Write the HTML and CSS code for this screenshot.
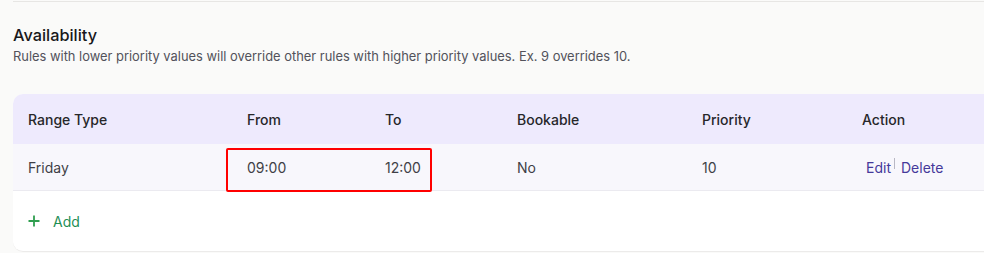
FILE: index.html
```html
<!DOCTYPE html>
<html lang="en">
<head>
<meta charset="utf-8">
<title>Availability</title>
<link rel="stylesheet" href="styles.css">
</head>
<body>
<div class="page">
  <div class="divider"></div>
  <section class="section">
    <h2 class="title">Availability</h2>
    <p class="subtitle">Rules with lower priority values will override other rules with higher priority values. Ex. 9 overrides 10.</p>
    <div class="card">
      <table class="table">
        <colgroup>
          <col class="c1"><col class="c2"><col class="c3"><col class="c4"><col class="c5"><col class="c6">
        </colgroup>
        <thead>
          <tr class="head-row">
            <th>Range Type</th>
            <th>From</th>
            <th>To</th>
            <th>Bookable</th>
            <th>Priority</th>
            <th>Action</th>
          </tr>
        </thead>
        <tbody>
          <tr class="body-row">
            <td>Friday</td>
            <td>09:00</td>
            <td>12:00</td>
            <td>No</td>
            <td>10</td>
            <td class="actions"><a class="link">Edit</a><span class="sep"></span><a class="link">Delete</a></td>
          </tr>
        </tbody>
      </table>
      <div class="add-row">
        <svg class="plus" width="12" height="12" viewBox="0 0 12 12"><path d="M6 0.5V11.5M0.5 6H11.5" stroke="#2f9e4f" stroke-width="1.8" fill="none"/></svg>
        <span class="add-text">Add</span>
      </div>
    </div>
  </section>
  <div class="highlight"></div>
</div>
</body>
</html>
```

FILE: styles.css
```css
html, body {
  margin: 0;
  padding: 0;
  background: #fafaf9;
  overflow: hidden;
}
body {
  font-family: Inter, "Noto Sans", sans-serif;
  color: #3f3f46;
  width: 984px;
  height: 253px;
}
.page {
  position: relative;
  padding-left: 13px;
}
.divider {
  height: 1px;
  margin-top: 1px;
  background: #e7e6e4;
}
.section {
  padding-top: 22px;
}
.title {
  margin: 0;
  font-size: 16.3px;
  line-height: 22px;
  font-weight: 500;
  color: #18181b;
}
.subtitle {
  margin: 2px 0 0;
  font-size: 12.9px;
  line-height: 18px;
  color: #52525b;
}
.card {
  margin-top: 28px;
  background: #ffffff;
  border-radius: 10px 0 0 10px;
  overflow: hidden;
  border-bottom: 1px solid #ecebea;
}
.table {
  width: 100%;
  border-collapse: collapse;
  table-layout: fixed;
  font-size: 14px;
}
.c1 { width: 219px; }
.c2 { width: 138px; }
.c3 { width: 132px; }
.c4 { width: 185px; }
.c5 { width: 160px; }
.c6 { width: auto; }
.head-row {
  background: #eeeafd;
}
.head-row th {
  height: 50px;
  padding: 0 0 0 15px;
  text-align: left;
  font-weight: 500;
  color: #27272a;
}
.body-row {
  background: #f8f7fc;
  border-bottom: 1px solid #ebeaf0;
}
.body-row td {
  height: 46px;
  padding: 0 0 0 15px;
  color: #3f3f46;
}
.actions {
  padding-left: 19px !important;
}
.link {
  color: #45399a;
}
.sep {
  display: inline-block;
  width: 1px;
  height: 11px;
  background: #b9b8c4;
  margin: 0 6px 0 3px;
  vertical-align: 4px;
}
.add-row {
  display: flex;
  align-items: center;
  height: 60px;
  padding-left: 15px;
}
.plus {
  display: block;
}
.add-text {
  margin-left: 13px;
  font-size: 14px;
  color: #1f8f55;
}
.highlight {
  position: absolute;
  left: 226px;
  top: 147px;
  width: 202px;
  height: 40px;
  border: 2px solid #f00;
  border-radius: 2px;
}
```
